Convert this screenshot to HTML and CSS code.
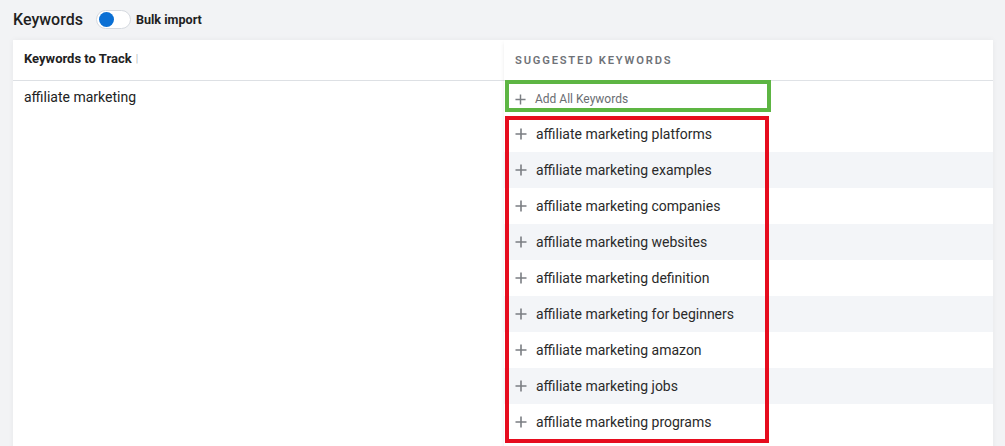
FILE: index.html
```html
<!DOCTYPE html>
<html lang="en">
<head>
<meta charset="utf-8">
<title>Keywords</title>
<link rel="stylesheet" href="styles.css">
</head>
<body>
<div class="page">
  <div class="topbar">
    <h1 class="title">Keywords</h1>
    <span class="toggle"><span class="knob"></span></span>
    <span class="bulk">Bulk import</span>
  </div>
  <div class="card">
    <div class="col-left">
      <div class="col-head"><span class="head-label">Keywords to Track</span><span class="caret">|</span></div>
      <div class="tracked">affiliate marketing</div>
    </div>
    <div class="col-right">
      <div class="col-head"><span class="suggest-label">SUGGESTED KEYWORDS</span></div>
      <div class="add-all">
        <svg class="plus small" viewBox="0 0 12 12"><path d="M6 0.5V11.5M0.5 6H11.5"/></svg>
        <span>Add All Keywords</span>
      </div>
      <ul class="list">
        <li class="row"><svg class="plus" viewBox="0 0 12 12"><path d="M6 0.5V11.5M0.5 6H11.5"/></svg><span>affiliate marketing platforms</span></li>
        <li class="row alt"><svg class="plus" viewBox="0 0 12 12"><path d="M6 0.5V11.5M0.5 6H11.5"/></svg><span>affiliate marketing examples</span></li>
        <li class="row"><svg class="plus" viewBox="0 0 12 12"><path d="M6 0.5V11.5M0.5 6H11.5"/></svg><span>affiliate marketing companies</span></li>
        <li class="row alt"><svg class="plus" viewBox="0 0 12 12"><path d="M6 0.5V11.5M0.5 6H11.5"/></svg><span>affiliate marketing websites</span></li>
        <li class="row"><svg class="plus" viewBox="0 0 12 12"><path d="M6 0.5V11.5M0.5 6H11.5"/></svg><span>affiliate marketing definition</span></li>
        <li class="row alt"><svg class="plus" viewBox="0 0 12 12"><path d="M6 0.5V11.5M0.5 6H11.5"/></svg><span>affiliate marketing for beginners</span></li>
        <li class="row"><svg class="plus" viewBox="0 0 12 12"><path d="M6 0.5V11.5M0.5 6H11.5"/></svg><span>affiliate marketing amazon</span></li>
        <li class="row alt"><svg class="plus" viewBox="0 0 12 12"><path d="M6 0.5V11.5M0.5 6H11.5"/></svg><span>affiliate marketing jobs</span></li>
        <li class="row"><svg class="plus" viewBox="0 0 12 12"><path d="M6 0.5V11.5M0.5 6H11.5"/></svg><span>affiliate marketing programs</span></li>
      </ul>
      <div class="mark mark-green"></div>
      <div class="mark mark-red"></div>
    </div>
  </div>
</div>
</body>
</html>
```

FILE: styles.css
```css
* { box-sizing: border-box; }
html, body {
  margin: 0;
  height: 100%;
  overflow: hidden;
}
body {
  background: #f2f3f5;
  font-family: Roboto, "Liberation Sans", Arial, sans-serif;
  color: #222;
}
.page {
  padding: 0 12px 0 13px;
}
.topbar {
  height: 40px;
  display: flex;
  align-items: center;
  padding-bottom: 1px;
}
.title {
  margin: 0;
  font-size: 16px;
  font-weight: 500;
  color: #1f1f1f;
}
.toggle {
  margin-left: 13px;
  width: 35px;
  height: 19px;
  border-radius: 10px;
  background: #fff;
  border: 1px solid #d6dae0;
  display: flex;
  align-items: center;
  padding-left: 2px;
}
.knob {
  width: 15px;
  height: 15px;
  border-radius: 50%;
  background: #0a6fd4;
}
.bulk {
  margin-left: 5px;
  font-size: 12.6px;
  font-weight: 700;
  color: #1f1f1f;
}
.card {
  background: #fff;
  height: 420px;
  display: grid;
  grid-template-columns: 491px 1fr;
  box-shadow: 0 0 6px rgba(0, 0, 0, 0.05);
}
.col-head {
  height: 41px;
  border-bottom: 1px solid #dde0e4;
  display: flex;
  align-items: center;
}
.col-left .col-head {
  padding-left: 11px;
  padding-bottom: 3px;
}
.head-label {
  font-size: 13px;
  font-weight: 700;
  color: #222;
}
.caret {
  margin-left: 4px;
  font-size: 11px;
  color: #999;
  font-weight: 300;
}
.tracked {
  padding: 8px 0 0 11px;
  font-size: 14px;
  line-height: 17px;
  color: #222;
}
.col-right {
  position: relative;
  box-shadow: -3px 0 4px -3px rgba(0, 0, 0, 0.08);
}
.col-right .col-head {
  padding-left: 11px;
  padding-top: 1px;
  border-bottom-color: #dfe2e6;
}
.suggest-label {
  font-size: 11.2px;
  font-weight: 600;
  letter-spacing: 1.8px;
  color: #6f7277;
}
.add-all {
  height: 35px;
  display: flex;
  align-items: center;
  padding-left: 11px;
  padding-top: 1px;
  font-size: 12px;
  color: #6a6d72;
}
.plus {
  width: 12px;
  height: 12px;
  flex: none;
  margin-right: 9px;
}
.plus path {
  stroke: #7b7e83;
  stroke-width: 1.6;
  fill: none;
}
.plus.small {
  width: 11px;
  height: 11px;
}
.list {
  list-style: none;
  margin: 0;
  padding: 0;
}
.row {
  height: 36px;
  display: flex;
  align-items: center;
  padding-left: 11px;
  font-size: 14px;
  color: #2a2a2a;
}
.row.alt {
  background: #f3f5f8;
}
.mark {
  position: absolute;
  pointer-events: none;
}
.mark-green {
  left: 1px;
  top: 40px;
  width: 266px;
  height: 32px;
  border: 4px solid #5db543;
}
.mark-red {
  left: 1px;
  top: 76px;
  width: 264px;
  height: 327px;
  border: 4px solid #e60c1e;
}
```
